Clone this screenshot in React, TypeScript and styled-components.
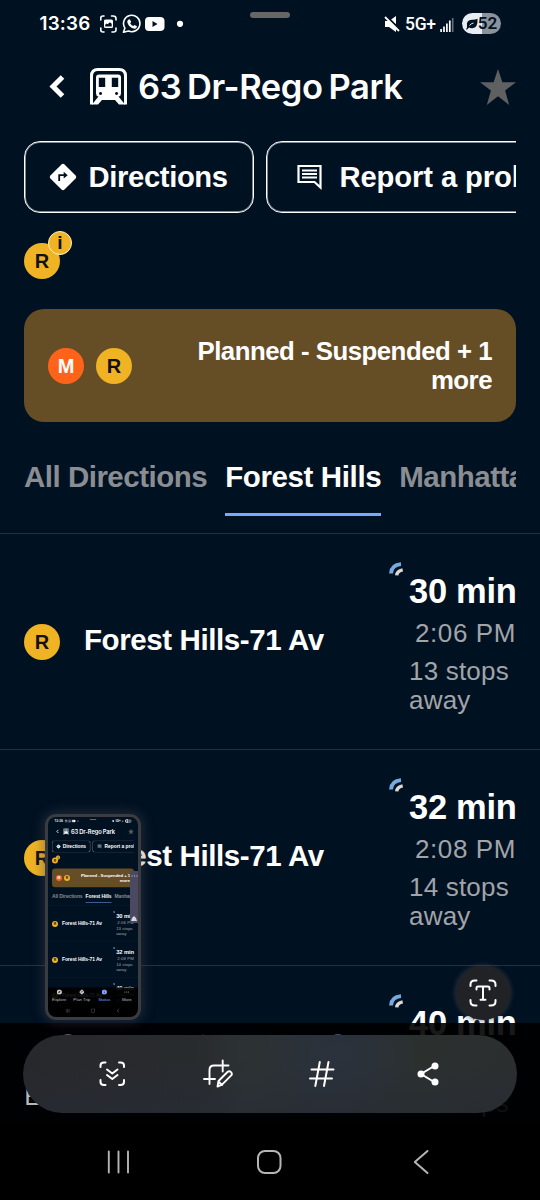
import React from 'react';
import styled, { createGlobalStyle } from 'styled-components';

const Global = createGlobalStyle`
  * { box-sizing: border-box; }
  html, body { margin: 0; padding: 0; background: #000; }
  body { overflow: hidden; }
`;

const Stage = styled.div`
  position: relative;
  width: 540px;
  height: 1200px;
  overflow: hidden;
`;

const Phone = styled.div`
  position: relative;
  width: 540px;
  height: 1200px;
  overflow: hidden;
  background: #001122;
  color: #fff;
  font-family: 'Liberation Sans', Arial, sans-serif;
`;

const StatusBar = styled.div`
  position: relative;
  display: flex;
  justify-content: space-between;
  align-items: center;
  height: 48px;
  padding: 0 39px 0 39.5px;
`;

const StatusGroup = styled.div`
  display: flex;
  align-items: center;
  height: 48px;
`;

const Clock = styled.span`
  width: 59.5px;
  font: 600 18.8px/24px Inter, sans-serif;
  letter-spacing: 0.2px;
`;

const Network = styled.span`
  width: 35px;
  margin-left: 5px;
  white-space: nowrap;
  font: 500 17.5px/24px Roboto, sans-serif;
  letter-spacing: -0.3px;
`;

const Pill = styled.div`
  position: absolute;
  left: 250px;
  top: 12px;
  width: 40px;
  height: 6px;
  border-radius: 3px;
  background: #666;
`;

const Battery = styled.div`
  display: flex;
  align-items: center;
  justify-content: center;
  width: 39px;
  height: 21px;
  margin-left: 8px;
  margin-bottom: 1px;
  border-radius: 11px;
  background: linear-gradient(90deg, #e9eef5 52%, #8a929c 52%);
  color: #001122;
  font: 600 17px/21px Roboto, sans-serif;
`;

const Header = styled.header`
  display: flex;
  align-items: center;
  height: 77px;
  padding: 0 24px 0 48px;
`;

const Title = styled.h1`
  flex: 1;
  margin: 0 0 0 11px;
  white-space: nowrap;
  font: 600 34.5px/44px Inter, sans-serif;
  letter-spacing: -0.4px;
  word-spacing: -2.5px;
`;

const Actions = styled.div`
  display: flex;
  gap: 12px;
  height: 72px;
  margin: 16px 24px 0;
  overflow: hidden;
`;

const Action = styled.button<{ $width: number; $pad: number; $gap: number }>`
  display: flex;
  flex: 0 0 ${p => p.$width}px;
  align-items: center;
  gap: ${p => p.$gap}px;
  height: 72px;
  padding: 0 0 0 ${p => p.$pad}px;
  border: 1px solid #fff;
  border-radius: 16px;
  box-shadow: inset 0 0 0 1px rgba(255, 255, 255, 0.5);
  background: none;
  color: #fff;
  white-space: nowrap;
  font: 700 29.2px/34px 'Liberation Sans', Arial, sans-serif;
`;

const ActionLabel = styled.span<{ $tracking: number }>`
  margin-bottom: 1px;
  letter-spacing: ${p => p.$tracking}px;
`;

const Lines = styled.div`
  display: flex;
  align-items: flex-end;
  height: 66px;
  padding-left: 24px;
`;

const BulletWrap = styled.div`
  position: relative;
`;

const Bullet = styled.div<{ $color: string; $ink: string }>`
  display: flex;
  flex: 0 0 36px;
  align-items: center;
  justify-content: center;
  width: 36px;
  height: 36px;
  border-radius: 50%;
  background: ${p => p.$color};
  color: ${p => p.$ink};
  font-size: 20px;
  font-weight: 700;
  line-height: 36px;
`;

const InfoBadge = styled.div`
  position: absolute;
  left: 24px;
  top: -12px;
  width: 24px;
  height: 24px;
  border: 1px solid #fff0c8;
  border-radius: 50%;
  background: #f0b323;
  color: #111;
  text-align: center;
  font: 700 19px/22px 'Liberation Sans', Arial, sans-serif;
`;

const Alert = styled.section`
  display: flex;
  align-items: center;
  gap: 12px;
  height: 113px;
  margin: 30px 24px 0;
  padding: 0 24px;
  border-radius: 20px;
  background: #654d26;
`;

const AlertText = styled.div`
  flex: 1;
  text-align: right;
  font-size: 25.8px;
  font-weight: 700;
  line-height: 29px;
  letter-spacing: -0.5px;
`;

const AlertLine = styled.div`
  white-space: nowrap;
`;

const Tabs = styled.nav`
  display: flex;
  gap: 18px;
  height: 111px;
  padding: 36px 0 0 24px;
  margin-right: 24px;
  overflow: hidden;
`;

const Tab = styled.div<{ $active?: boolean }>`
  height: 58px;
  border-bottom: 3px solid ${p => (p.$active ? '#7aa7ff' : 'transparent')};
  color: ${p => (p.$active ? '#fff' : '#8a8d92')};
  white-space: nowrap;
  font-size: 29.5px;
  font-weight: 700;
  line-height: 37px;
  letter-spacing: ${p => (p.$active ? '-0.38px' : '-0.5px')};
`;

const Row = styled.div`
  display: flex;
  align-items: center;
  height: 216px;
  padding: 0 24px;
  border-top: 1px solid #24313f;
`;

const Destination = styled.div`
  flex: 1;
  margin: 0 0 3px 24px;
  white-space: nowrap;
  font-size: 29.5px;
  font-weight: 700;
  line-height: 34px;
  letter-spacing: -0.4px;
`;

const Arrival = styled.div`
  position: relative;
  width: 107px;
  height: 216px;
  padding-top: 37px;
`;

const LiveMark = styled.svg`
  position: absolute;
  left: -20px;
  top: 28px;
`;

const Minutes = styled.div`
  padding-right: 2px;
  text-align: right;
  white-space: nowrap;
  font: 700 34.5px/40px 'Liberation Sans', Arial, sans-serif;
  letter-spacing: -0.3px;
`;

const ClockTime = styled.div`
  margin-top: 4px;
  color: #a1a4a8;
  text-align: right;
  white-space: nowrap;
  font-size: 26px;
  line-height: 36px;
  letter-spacing: 0.6px;
`;

const Stops = styled.div`
  margin-top: 6px;
  color: #a1a4a8;
  font-size: 26px;
  line-height: 29.5px;
  letter-spacing: 0.2px;
`;

const BottomNav = styled.div`
  position: absolute;
  left: 0;
  right: 0;
  bottom: 0;
  height: 177px;
  background: rgba(0, 0, 0, 0.9);
`;

const NavItems = styled.div`
  display: grid;
  grid-template-columns: repeat(4, 1fr);
  height: 101px;
  padding-top: 11px;
`;

const NavItem = styled.div<{ $active?: boolean }>`
  display: flex;
  flex-direction: column;
  align-items: center;
  gap: 16px;
  color: ${p => (p.$active ? '#7aa7ff' : '#b5b7ba')};
  white-space: nowrap;
  font-size: 25.5px;
  line-height: 28px;
`;

const SystemNav = styled.div`
  display: flex;
  align-items: center;
  height: 76px;
  padding-left: 106px;
  background: #000;
`;

const HomeIcon = styled.svg`
  margin: 0 129.5px 0 126px;
`;

const Preview = styled.div`
  position: absolute;
  left: 45px;
  top: 814px;
  width: 96px;
  height: 206px;
  border: 3px solid #3b3c42;
  border-radius: 11px;
  overflow: hidden;
  background: #3b3c42;
`;

const PreviewGlow = styled.div`
  position: absolute;
  left: 45px;
  top: 814px;
  width: 96px;
  height: 206px;
  border-radius: 11px;
  box-shadow: 0 0 12px 2px rgba(70, 70, 80, 0.45);
`;

const PreviewScale = styled.div`
  width: 540px;
  height: 1200px;
  transform: scale(0.16667);
  transform-origin: 0 0;
`;

const EdgePanel = styled.div`
  position: absolute;
  right: 0;
  top: 54px;
  width: 8px;
  height: 52px;
  border-radius: 3px 0 0 3px;
  background: #4b4861;
`;

const TextButton = styled.div`
  position: absolute;
  left: 456px;
  top: 966px;
  display: flex;
  align-items: center;
  justify-content: center;
  width: 54px;
  height: 54px;
  border-radius: 50%;
  background: #202226;
  box-shadow: 0 0 5px 1px rgba(70, 72, 78, 0.6);
`;

const Toolbar = styled.div`
  position: absolute;
  left: 23px;
  top: 1035px;
  display: flex;
  align-items: center;
  gap: 74.5px;
  width: 494px;
  height: 78px;
  padding: 0 0 0 74px;
  border-radius: 39px;
  background:
    radial-gradient(80px 60px at 315px 20px, rgba(44, 52, 68, 0.6), transparent),
    linear-gradient(180deg, transparent 30%, rgba(38, 43, 56, 0.45)),
    linear-gradient(90deg, #27282b, #282b2e 35%, #2c3233 45%, #2a2f34 62%, #2b302f 80%, #2b2e2e);
`;

const ShareIcon = styled.svg`
  margin-left: 4px;
`;

const stroke = { fill: 'none', stroke: 'currentColor', strokeLinecap: 'round', strokeLinejoin: 'round' } as const;

function StatusIcons() {
  return (
    <svg width="86" height="20" viewBox="0 0 86 20">
      <g {...stroke} stroke="#fff" strokeWidth="1.6">
        <path d="M1.8 6V4Q1.8 2 4 2H5M12.500 2h1.500Q17 2 17 4.500V6M17 14v2Q17 18 14.500 18H13M5 18H4Q1.800 18 1.800 16V14" />
        <path d="M24.500 18.200l1.400-4.200A8.200 8.200 0 1 1 29.500 17z" />
      </g>
      <path fill="#fff" fillRule="evenodd" d="M7 5.500h5.500Q14 5.500 14 7v5.500q0 1.500-1.500 1.500h-6Q5 14 5 12.500v-6Q5 5.500 7 5.500zM6.200 12.400h6.500v-2.600l-1.800-1.500-2.300 2-1-.8-1.400 1.200z" />
      <path fill="#fff" d="M29.300 5.800l1.500-.5 1.400 2.800-1 1.200q1 2 3 2.800l1.200-1.100 2.600 1.300q-.3 2.700-2.800 2.500-6-1.300-7-7 .2-1.200 1.100-2z" />
      <path fill="#fff" fillRule="evenodd" d="M50 3h11q4.500 0 4.500 4v6q0 4-4.500 4H50q-4 0-4-4V7q0-4 4-4zm3.500 4v6l5-3z" />
      <circle cx="81" cy="9.800" r="3.100" fill="#fff" />
    </svg>
  );
}

function TrainIcon() {
  return (
    <svg width="37" height="38" viewBox="0 0 37 38">
      <path d="M1.500 36.500V8Q1.500 1.500 8 1.500h21q6.500 0 6.500 6.500v28.500" fill="none" stroke="#fff" strokeWidth="3" />
      <path
        fill="#fff"
        fillRule="evenodd"
        d="M9 6.500h19q3 0 3 3v16q0 2.500-2.500 3L35 36.500h-6L25 32H12l-4 4.500H2L8.500 28.500Q6 28 6 25.500v-16q0-3 3-3zm-.2 3.300v9.200h6.400V9.800zm13 0v9.200h6.400V9.800zM10.500 24a1.500 1.500 0 1 0 .1 0zm16 0a1.500 1.500 0 1 0 .1 0z"
      />
    </svg>
  );
}

function DirectionsIcon({ size = 28, fill = '#fff' }: { size?: number; fill?: string }) {
  return (
    <svg width={size} height={size} viewBox="0 0 28 28">
      <path d="M12.500 1.400q1.500-1.400 3 0l11.100 11.100q1.400 1.500 0 3L15.500 26.600q-1.500 1.400-3 0L1.400 15.500q-1.400-1.500 0-3z" fill={fill} />
      <path d="M10.200 18v-5.800h5.500" fill="none" stroke="#001122" strokeWidth="1.800" />
      <path d="M14.700 8.800l4 3.400-4 3.400z" fill="#001122" />
    </svg>
  );
}

function LiveIcon() {
  return (
    <LiveMark width="15" height="15" viewBox="0 0 15 15">
      <path d="M2 11.500Q2.500 2.800 12 2.200" fill="none" stroke="#76a9e2" strokeWidth="3.800" />
      <path d="M7.700 13.300Q8 9 13.700 7.800" fill="none" stroke="#ddd9d8" strokeWidth="3.400" />
    </LiveMark>
  );
}

const arrivals = [
  { min: '30 min', time: '2:06 PM', stops: '13 stops' },
  { min: '32 min', time: '2:08 PM', stops: '14 stops' },
  { min: '40 min', time: '2:16 PM', stops: '17 stops' },
];

function StationScreen() {
  return (
    <Phone>
      <StatusBar>
        <StatusGroup>
          <Clock>13:36</Clock>
          <StatusIcons />
        </StatusGroup>
        <Pill />
        <StatusGroup>
          <svg width="16" height="18" viewBox="0 0 16 18">
            <path d="M1 6h4l7-5v16l-7-5H1z" fill="#fff" />
            <path d="M1.500 0.500l15 15" stroke="#001122" strokeWidth="2.500" />
            <path d="M1 2l14 14" stroke="#fff" strokeWidth="1.800" />
          </svg>
          <Network>5G+</Network>
          <svg width="14" height="15" viewBox="0 0 14 15">
            <path d="M1.100 15v-3M4 15V9.500M6.900 15V6.500M9.800 15V3.500" stroke="#fff" strokeWidth="1.700" />
            <path d="M12.700 15V1" stroke="#66717e" strokeWidth="1.600" />
          </svg>
          <Battery>
            <svg width="12" height="12" viewBox="0 0 12 12">
              <path d="M1 8Q0 2 6 1.800q3 .2 5.500-1Q12 10 6.500 10.200q-2 .2-3.500-.7L1 11.500H0L1 9.500z" fill="#001122" />
              <path d="M3.500 7.500Q5 5.500 7.500 5" fill="none" stroke="#e9eef5" strokeWidth="1" />
            </svg>
            52
          </Battery>
        </StatusGroup>
      </StatusBar>
      <Header>
        <svg width="42" height="28" viewBox="0 0 42 28">
          <path d="M14.500 4L5 13.500l9.500 9.500" fill="none" stroke="#fff" strokeWidth="5" />
        </svg>
        <TrainIcon />
        <Title>63 Dr-Rego Park</Title>
        <svg width="36" height="36" viewBox="0 0 36 36">
          <path d="M18 0l4.400 13.300H36l-10.900 8.200L29.200 36 18 27.300 6.800 36l4.100-14.500L0 13.300h13.600z" fill="#5f6060" />
        </svg>
      </Header>
      <Actions>
        <Action $width={230} $pad={23.5} $gap={12}>
          <DirectionsIcon />
          <ActionLabel $tracking={-0.35}>Directions</ActionLabel>
        </Action>
        <Action $width={310} $pad={29} $gap={17.5}>
          <svg width="26" height="26" viewBox="0 0 26 26">
            <path d="M2.500 2h22v21.500L18.500 18H2.500z" fill="none" stroke="#fff" strokeWidth="2.200" />
            <path d="M6 6.500h15M6 10h15M6 13.500h15" stroke="#fff" strokeWidth="2" />
          </svg>
          <ActionLabel $tracking={-0.1}>Report a problem</ActionLabel>
        </Action>
      </Actions>
      <Lines>
        <BulletWrap>
          <Bullet $color="#f0b323" $ink="#111">R</Bullet>
          <InfoBadge>i</InfoBadge>
        </BulletWrap>
      </Lines>
      <Alert>
        <Bullet $color="#ff6319" $ink="#fff">M</Bullet>
        <Bullet $color="#f0b323" $ink="#111">R</Bullet>
        <AlertText>
          <AlertLine>Planned - Suspended + 1</AlertLine>
          <AlertLine>more</AlertLine>
        </AlertText>
      </Alert>
      <Tabs>
        <Tab>All Directions</Tab>
        <Tab $active>Forest Hills</Tab>
        <Tab>Manhattan</Tab>
      </Tabs>
      {arrivals.map(a => (
        <Row key={a.min}>
          <Bullet $color="#f0b323" $ink="#111">R</Bullet>
          <Destination>Forest Hills-71 Av</Destination>
          <Arrival>
            <LiveIcon />
            <Minutes>{a.min}</Minutes>
            <ClockTime>{a.time}</ClockTime>
            <Stops>{a.stops} away</Stops>
          </Arrival>
        </Row>
      ))}
      <BottomNav>
        <NavItems>
          <NavItem>
            <svg width="32" height="32" viewBox="0 0 32 32">
              <circle cx="16" cy="16" r="15.500" fill="#c5c6c8" />
              <path d="M23 9l-4 10-10 4 4-10z" fill="#111" />
              <circle cx="16" cy="16" r="2" fill="#ccc" />
            </svg>
            Explore
          </NavItem>
          <NavItem>
            <DirectionsIcon size={32} fill="#c5c6c8" />
            Plan Trip
          </NavItem>
          <NavItem $active>
            <svg width="32" height="32" viewBox="0 0 32 32">
              <circle cx="16" cy="16" r="15.500" fill="#7aa7ff" />
              <path d="M16 8v3M16 14v10" stroke="#111" strokeWidth="3" />
            </svg>
            Status
          </NavItem>
          <NavItem>
            <svg width="32" height="32" viewBox="0 0 32 32" fill="#ccc">
              <circle cx="4" cy="16" r="3" />
              <circle cx="16" cy="16" r="3" />
              <circle cx="28" cy="16" r="3" />
            </svg>
            More
          </NavItem>
        </NavItems>
        <SystemNav>
          <svg width="24" height="24" viewBox="0 0 24 24">
            <path d="M2.800 1.500v21M12.500 1.500v21M22 1.500v21" {...stroke} stroke="#b5b5b5" strokeWidth="1.900" />
          </svg>
          <HomeIcon width="26" height="26" viewBox="0 0 26 26">
            <rect x="2" y="2" width="22.500" height="22" rx="7" fill="none" stroke="#b5b5b5" strokeWidth="2" />
          </HomeIcon>
          <svg width="18" height="26" viewBox="0 0 18 26">
            <path d="M15.500 2L2.800 13l12.700 11" {...stroke} stroke="#b5b5b5" strokeWidth="2" />
          </svg>
        </SystemNav>
      </BottomNav>
    </Phone>
  );
}

export default function App() {
  return (
    <Stage>
      <Global />
      <StationScreen />
      <PreviewGlow />
      <Preview>
        <PreviewScale>
          <StationScreen />
        </PreviewScale>
        <EdgePanel>
          <svg width="8" height="52" viewBox="0 0 8 52">
            <path d="M1.500 5h1M4 5h1M6.500 5h1" stroke="#d6d4e0" strokeWidth="1" />
            <path d="M1 50l1-3 2-2 2 2 1 3z" fill="#d6d4e0" />
          </svg>
        </EdgePanel>
      </Preview>
      <TextButton>
        <svg width="28" height="28" viewBox="0 0 28 28" {...stroke} stroke="#fff" strokeWidth="2">
          <path d="M1.500 7V5.500Q1.500 1.500 6 1.500h1.500M20.500 1.500H22q4.500 0 4.500 4V7M26.500 21v1.500q0 4-4.500 4h-1.500M7.500 26.500H6q-4.500 0-4.500-4V21" />
          <path d="M7.500 10.500V9Q7.500 7.500 9 7.500h10q1.500 0 1.500 1.500v1.500M14 7.500v13M11.500 20.700h5" />
        </svg>
      </TextButton>
      <Toolbar>
        <svg width="30" height="30" viewBox="0 0 30 30" {...stroke} stroke="#fff" strokeWidth="2">
          <path d="M3.500 8V6.500q0-3 3.500-3h1.500M22 3.500h1.500q3.500 0 3.500 3V8M27 21v2q0 3-3.500 3H22M8.500 26H7q-3.500 0-3.500-3v-2" />
          <path d="M10 10.500l5.300 4 5.200-4M10 16l5.300 4 5.200-4" />
        </svg>
        <svg width="32" height="32" viewBox="0 0 32 32" {...stroke} stroke="#fff" strokeWidth="1.900">
          <path d="M2 21h11M7.500 26V12Q7.500 7.500 12 7.500h14.500M20.700 2.500v11" />
          <path d="M15.500 28.500l1-5.500 9-9q1.800-1.500 3.500.2 1.700 1.700 0 3.500l-9 9zM16.500 23.500l3.500 3.500" />
        </svg>
        <svg width="28" height="30" viewBox="0 0 28 30" {...stroke} stroke="#fff" strokeWidth="2">
          <path d="M11.800 3L7.300 27M20.500 3L16 27M3.500 10.500h22M2 19.500h22" />
        </svg>
        <ShareIcon width="26" height="28" viewBox="0 0 26 28">
          <path d="M20 5.500L6 14l14 8.500" fill="none" stroke="#fff" strokeWidth="2" />
          <circle cx="20" cy="6" r="3.500" fill="#fff" />
          <circle cx="6" cy="14" r="3.500" fill="#fff" />
          <circle cx="20" cy="22" r="3.500" fill="#fff" />
        </ShareIcon>
      </Toolbar>
    </Stage>
  );
}
